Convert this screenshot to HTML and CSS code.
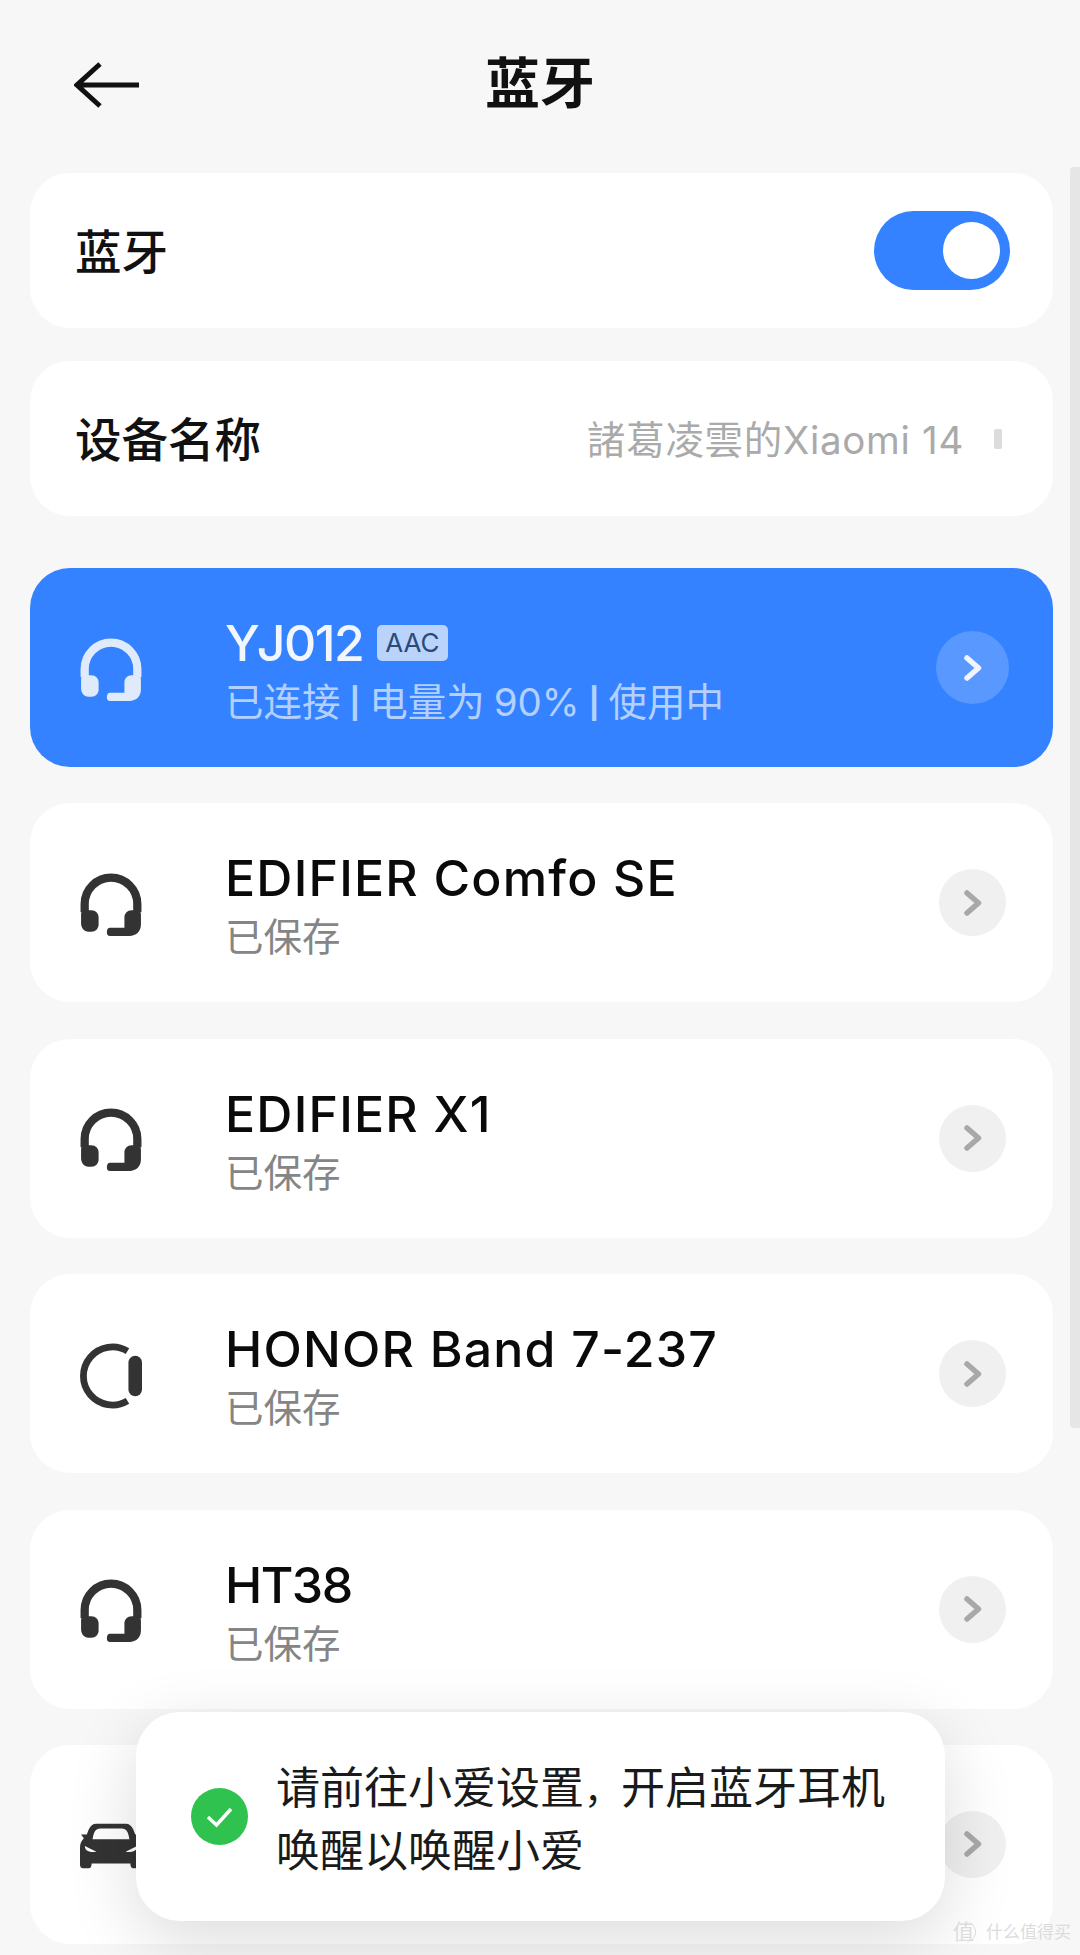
FILE: index.html
```html
<!DOCTYPE html>
<html lang="zh-CN">
<head>
    <meta charset="UTF-8">
    <meta name="viewport" content="width=device-width, initial-scale=1.0">
    <title>蓝牙</title>
    <link rel="stylesheet" href="styles.css">
</head>
<body>
    <svg width="0" height="0" class="defs">
        <symbol id="headset" viewBox="0 0 60 62">
            <path d="M4.500 38V30A25.500 25.500 0 0 1 55.500 30V38" fill="none" stroke="currentColor" stroke-width="8"/>
            <path d="M1 40C1 37 3 36 6 36H11C15 36 18 39 18 43V50C18 54 15 57 11 57H8C4 57 1 53 1 49Z" fill="currentColor"/>
            <path d="M59 40C59 37 57 36 54 36H50C46 36 43 39 43 43V53H29C27 53 26 55 26 57.500C26 60 27 61 29 61H48C54 61 59 57 59 50Z" fill="currentColor"/>
        </symbol>
        <symbol id="chevron" viewBox="0 0 20 28">
            <path d="M4 4L15.500 14L4 24" fill="none" stroke="currentColor" stroke-width="5.500" stroke-linecap="round" stroke-linejoin="round"/>
        </symbol>
    </svg>

    <header class="top-bar">
        <svg class="back" width="66" height="46" viewBox="0 0 66 46">
            <path d="M26 2L3 23L26 44M3 23H65" fill="none" stroke="#111" stroke-width="5"/>
        </svg>
        <h1>蓝牙</h1>
    </header>

    <main class="content">
        <section class="card setting">
            <span class="setting-name">蓝牙</span>
            <span class="switch"><span class="knob"></span></span>
        </section>
        <section class="card setting">
            <span class="setting-name">设备名称</span>
            <span class="setting-value">諸葛凌雲的Xiaomi 14</span>
            <span class="more"></span>
        </section>

        <ul class="devices">
            <li class="device active">
                <span class="icon-slot"><svg width="62" height="64"><use href="#headset"/></svg></span>
                <div class="device-text">
                    <div class="device-name"><span class="narrow">YJ012</span> <span class="codec">AAC</span></div>
                    <div class="device-status">已连接 <span class="sep">|</span> 电量为 90% <span class="sep">|</span> 使用中</div>
                </div>
                <span class="go"><svg width="20" height="28"><use href="#chevron"/></svg></span>
            </li>
            <li class="device">
                <span class="icon-slot"><svg width="62" height="64"><use href="#headset"/></svg></span>
                <div class="device-text">
                    <div class="device-name">EDIFIER Comfo SE</div>
                    <div class="device-status">已保存</div>
                </div>
                <span class="go"><svg width="20" height="28"><use href="#chevron"/></svg></span>
            </li>
            <li class="device">
                <span class="icon-slot"><svg width="62" height="64"><use href="#headset"/></svg></span>
                <div class="device-text">
                    <div class="device-name">EDIFIER X1</div>
                    <div class="device-status">已保存</div>
                </div>
                <span class="go"><svg width="20" height="28"><use href="#chevron"/></svg></span>
            </li>
            <li class="device">
                <span class="icon-slot">
                    <svg width="64" height="68" viewBox="0 0 64 68">
                        <path d="M49 8.300A30 30 0 1 0 49 59.700" fill="none" stroke="currentColor" stroke-width="7"/>
                        <rect x="50" y="13" width="14" height="42" rx="7" fill="currentColor"/>
                    </svg>
                </span>
                <div class="device-text">
                    <div class="device-name">HONOR Band 7-237</div>
                    <div class="device-status">已保存</div>
                </div>
                <span class="go"><svg width="20" height="28"><use href="#chevron"/></svg></span>
            </li>
            <li class="device">
                <span class="icon-slot"><svg width="62" height="64"><use href="#headset"/></svg></span>
                <div class="device-text">
                    <div class="device-name"><span class="narrow">HT38</span></div>
                    <div class="device-status">已保存</div>
                </div>
                <span class="go"><svg width="20" height="28"><use href="#chevron"/></svg></span>
            </li>
            <li class="device">
                <span class="icon-slot">
                    <svg width="64" height="46" viewBox="0 0 64 46">
                        <path fill="currentColor" fill-rule="evenodd" d="M17 0H47C51 0 53 2 55 6L57 11H63L60 15C63 18 64 21 64 25V42C64 44 63 46 61 46H55C53 46 52 44 52 41H12C12 44 11 46 9 46H3C1 46 0 44 0 42V25C0 21 1 18 4 15L1 11H7L9 6C11 2 13 0 17 0ZM21 5C16 5 14 9 13 16H51C50 9 48 5 43 5ZM5 23C5 27 8 30 17 29ZM59 23L47 29C56 30 59 27 59 23Z"/>
                    </svg>
                </span>
                <div class="device-text"></div>
                <span class="go"><svg width="20" height="28"><use href="#chevron"/></svg></span>
            </li>
        </ul>
    </main>

    <div class="scrollbar"></div>

    <div class="toast">
        <svg class="toast-check" width="57" height="57" viewBox="0 0 57 57">
            <circle cx="28.500" cy="28.500" r="28.500" fill="#2fc24f"/>
            <path d="M17 29L25.500 37L40 21" fill="none" stroke="#fff" stroke-width="3.500"/>
        </svg>
        <p>请前往小爱设置<span class="comma">，</span>开启蓝牙耳机<br>唤醒以唤醒小爱</p>
    </div>

    <div class="watermark"><span class="mark">值</span>什么值得买</div>
</body>
</html>
```

FILE: styles.css
```css
html, body {
    margin: 0;
    padding: 0;
}

body {
    position: relative;
    width: 1080px;
    height: 1955px;
    overflow: hidden;
    background: #f7f7f7;
    font-family: Inter, "Noto Sans CJK SC", sans-serif;
    color: #111;
}

.defs {
    position: absolute;
}

.top-bar {
    height: 173px;
    display: grid;
    grid-template-columns: 1fr auto 1fr;
    align-items: center;
    padding: 0 74px 4px;
    box-sizing: border-box;
}

.top-bar h1 {
    margin: 0 0 2px;
    font-size: 55px;
    font-weight: 700;
    line-height: 1;
}

.content {
    padding: 0 27px 0 30px;
}

.card {
    background: #fff;
    border-radius: 40px;
}

.setting {
    height: 155px;
    margin-bottom: 33px;
    padding: 0 43px 0 45px;
    display: flex;
    align-items: center;
    box-sizing: border-box;
}

.setting-name {
    flex: 1;
    margin-bottom: 5px;
    font-size: 46.500px;
    font-weight: 500;
}

.setting-value {
    margin-bottom: 3px;
    font-size: 38.500px;
    letter-spacing: 0.700px;
    color: #aaa;
}

.more {
    width: 8px;
    height: 20px;
    margin: 0 8px 0 30px;
    border-radius: 2px;
    background: #dcdcdc;
}

.switch {
    width: 136px;
    height: 79px;
    padding: 11px 10px 11px 0;
    box-sizing: border-box;
    display: flex;
    justify-content: flex-end;
    border-radius: 40px;
    background: #3482ff;
}

.knob {
    width: 57px;
    height: 57px;
    border-radius: 50%;
    background: #fff;
}

.devices {
    list-style: none;
    margin: 52px 0 0;
    padding: 0;
    display: flex;
    flex-direction: column;
    gap: 36.400px;
}

.device {
    height: 199px;
    padding: 0 47px 0 50px;
    box-sizing: border-box;
    display: flex;
    align-items: center;
    background: #fff;
    border-radius: 40px;
    color: #333;
}

.icon-slot {
    flex: none;
    width: 62px;
    display: flex;
    margin-top: 4px;
}

.device-text {
    flex: 1;
    min-width: 0;
    margin-left: 83px;
    margin-top: 9px;
}

.device-name {
    font-size: 50px;
    font-weight: 500;
    line-height: 60px;
    letter-spacing: 1.200px;
    color: #0a0a0a;
}

.narrow {
    letter-spacing: -1.500px;
}

.device-status {
    font-size: 38.500px;
    line-height: 58px;
    color: #858585;
}

.go {
    width: 67px;
    height: 67px;
    display: flex;
    align-items: center;
    justify-content: center;
    border-radius: 50%;
    background: #f0f0f0;
    color: #a8a8a8;
}

.device.active {
    background: #3482ff;
    color: #dfeafb;
}

.active .device-name {
    display: flex;
    align-items: center;
    gap: 14px;
    color: #f2f6ff;
}

.active .device-status {
    word-spacing: -2px;
    color: #b3d0ff;
}

.sep {
    font-size: 30px;
    font-weight: 700;
    vertical-align: 2px;
}

.active .go {
    width: 73px;
    height: 73px;
    margin-right: -3px;
    background: rgba(255, 255, 255, 0.18);
    color: #f0f4fb;
}

.codec {
    padding: 0 8px;
    height: 36px;
    display: flex;
    align-items: center;
    border-radius: 5px;
    background: #b9d3fb;
    color: #2c4a78;
    font-size: 26px;
    font-weight: 400;
    letter-spacing: 0;
}

.scrollbar {
    position: absolute;
    top: 167px;
    right: 0;
    width: 10px;
    height: 1261px;
    border-radius: 4px 0 0 4px;
    background: #e6e6e6;
}

.toast {
    position: absolute;
    left: 136px;
    top: 1712px;
    width: 809px;
    height: 209px;
    padding-left: 55px;
    box-sizing: border-box;
    display: flex;
    align-items: center;
    background: #fff;
    border-radius: 44px;
    box-shadow: 0 20px 70px rgba(0, 0, 0, 0.14);
}

.toast-check {
    flex: none;
}

.toast p {
    margin: 6px 0 0 28px;
    font-size: 44px;
    line-height: 60px;
    color: #1a1a1a;
}

.comma {
    font-size: 37px;
}

.watermark {
    position: absolute;
    left: 953px;
    top: 1921px;
    display: flex;
    align-items: center;
    font-size: 17px;
    line-height: 22px;
    color: #dcdcdc;
}

.mark {
    margin-right: 10px;
    width: 22px;
    height: 22px;
    border-radius: 50%;
    border-right: 1px solid #dcdcdc;
    font-size: 21px;
}
```
